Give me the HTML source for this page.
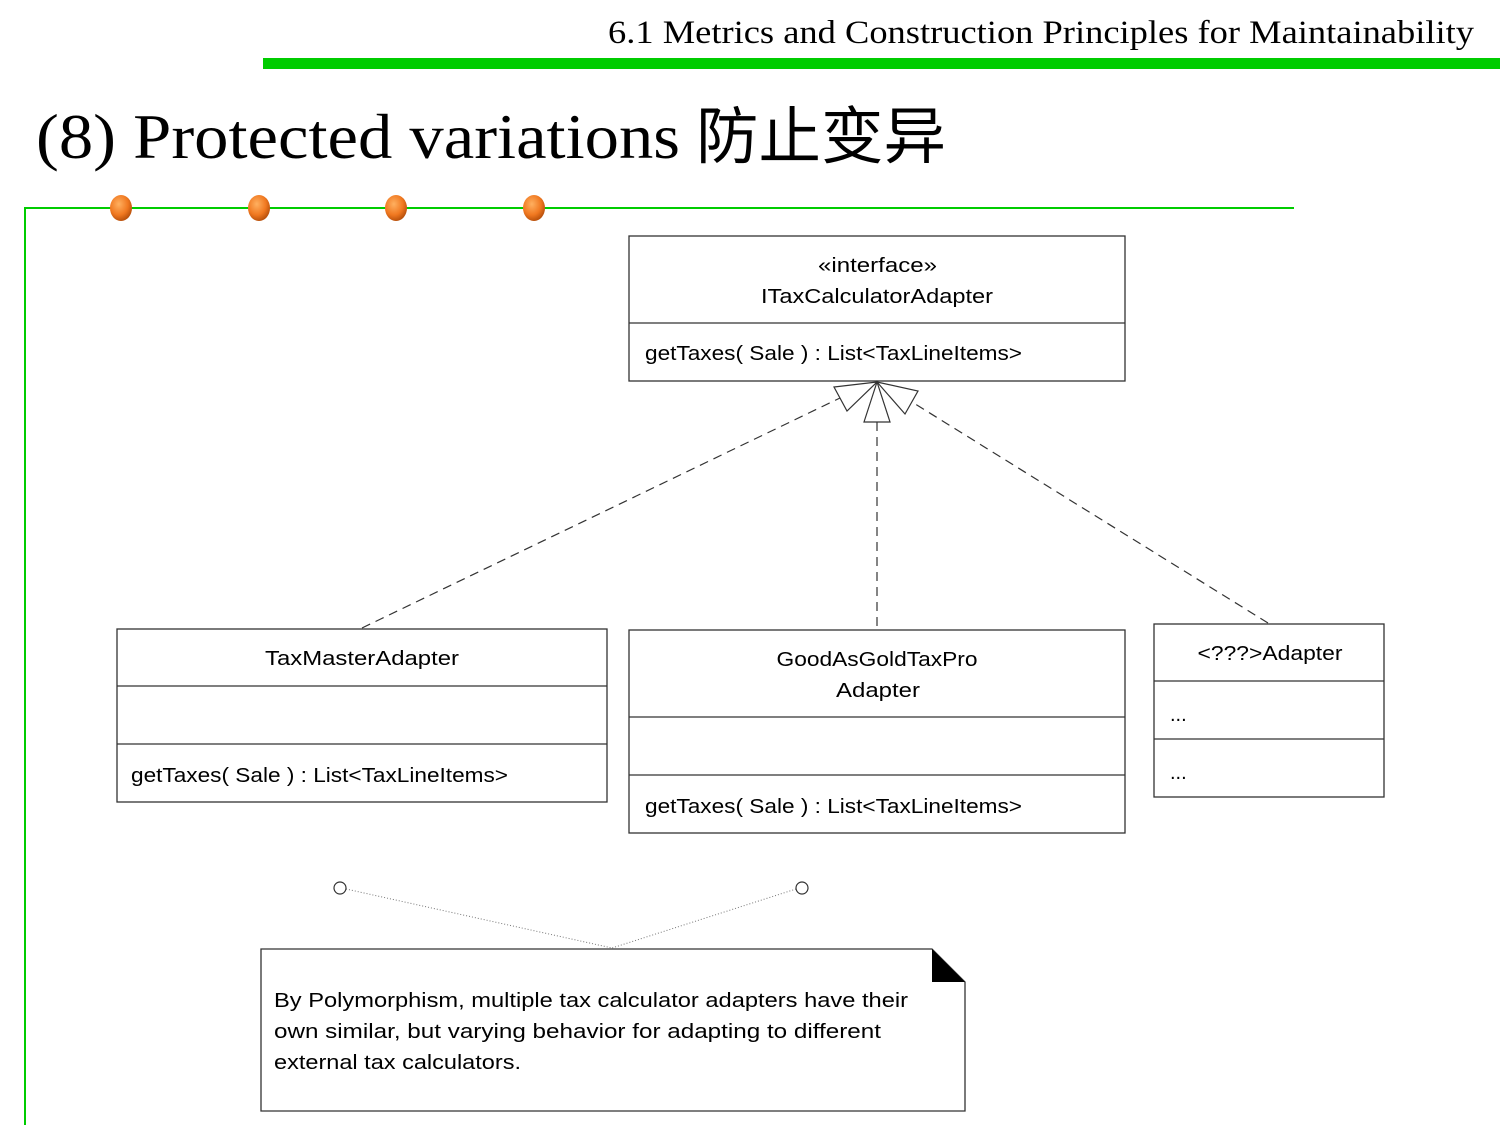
<!DOCTYPE html>
<html><head><meta charset="utf-8"><style>
html,body{margin:0;padding:0;background:#fff;width:1500px;height:1125px;overflow:hidden}
svg{display:block}
.c{font-family:"Liberation Sans",sans-serif;font-size:20px;fill:#000}
.s{font-family:"Liberation Serif",serif;fill:#000}
</style></head><body>
<svg width="1500" height="1125" viewBox="0 0 1500 1125">
<defs>
<radialGradient id="g" cx="0.4" cy="0.35" r="0.7">
<stop offset="0" stop-color="#ffb060"/><stop offset="0.6" stop-color="#f07820"/><stop offset="1" stop-color="#b04a08"/>
</radialGradient>
</defs>
<text class="s" x="608" y="43" font-size="33" textLength="866" lengthAdjust="spacingAndGlyphs">6.1 Metrics and Construction Principles for Maintainability</text>
<rect x="263" y="58" width="1237" height="11" fill="#00cc00"/>
<text class="s" x="36" y="158" font-size="64" textLength="644" lengthAdjust="spacingAndGlyphs">(8) Protected variations</text>
<text x="696" y="158" font-size="62" font-family="'Noto Sans CJK SC',sans-serif" textLength="250" lengthAdjust="spacingAndGlyphs">防止变异</text>
<line x1="24" y1="208" x2="1294" y2="208" stroke="#00cc00" stroke-width="2"/>
<line x1="25" y1="207" x2="25" y2="1125" stroke="#00cc00" stroke-width="2"/>
<ellipse cx="121" cy="208" rx="11" ry="13" fill="url(#g)"/>
<ellipse cx="259" cy="208" rx="11" ry="13" fill="url(#g)"/>
<ellipse cx="396" cy="208" rx="11" ry="13" fill="url(#g)"/>
<ellipse cx="534" cy="208" rx="11" ry="13" fill="url(#g)"/>

<g fill="#fff" stroke="#333" stroke-width="1.3">
<rect x="629" y="236" width="496" height="145"/>
<line x1="629" y1="323" x2="1125" y2="323"/>
<rect x="117" y="629" width="490" height="173"/>
<line x1="117" y1="686" x2="607" y2="686"/>
<line x1="117" y1="744" x2="607" y2="744"/>
<rect x="629" y="630" width="496" height="203"/>
<line x1="629" y1="717" x2="1125" y2="717"/>
<line x1="629" y1="775" x2="1125" y2="775"/>
<rect x="1154" y="624" width="230" height="173"/>
<line x1="1154" y1="681" x2="1384" y2="681"/>
<line x1="1154" y1="739" x2="1384" y2="739"/>
<path d="M261 949 H932 L965 982 V1111 H261 Z"/>
</g>
<path d="M932 949 L965 982 H932 Z" fill="#000"/>

<g stroke="#333" stroke-width="1.2" fill="none" stroke-dasharray="9,6">
<line x1="362" y1="628" x2="840" y2="398"/>
<line x1="877" y1="422" x2="877" y2="629"/>
<line x1="1268" y1="623" x2="912" y2="402"/>
</g>
<g stroke="#333" stroke-width="1.2" fill="#fff">
<path d="M877 382 L834 387 L847 411 Z"/>
<path d="M877 382 L864 422 L890 422 Z"/>
<path d="M877 382 L918 391 L905 414 Z"/>
</g>
<g stroke="#777" stroke-width="1" stroke-dasharray="1,2" fill="none">
<line x1="346" y1="889" x2="612" y2="948"/>
<line x1="796" y1="889" x2="612" y2="948"/>
</g>
<circle cx="340" cy="888" r="6" fill="#fff" stroke="#333" stroke-width="1.2"/>
<circle cx="802" cy="888" r="6" fill="#fff" stroke="#333" stroke-width="1.2"/>

<text class="c" x="818" y="272" textLength="119" lengthAdjust="spacingAndGlyphs">«interface»</text>
<text class="c" x="877" y="303" text-anchor="middle" textLength="232" lengthAdjust="spacingAndGlyphs">ITaxCalculatorAdapter</text>
<text class="c" x="645" y="360" textLength="377" lengthAdjust="spacingAndGlyphs">getTaxes( Sale ) : List&lt;TaxLineItems&gt;</text>
<text class="c" x="362" y="665" text-anchor="middle" textLength="194" lengthAdjust="spacingAndGlyphs">TaxMasterAdapter</text>
<text class="c" x="131" y="782" textLength="377" lengthAdjust="spacingAndGlyphs">getTaxes( Sale ) : List&lt;TaxLineItems&gt;</text>
<text class="c" x="877" y="666" text-anchor="middle" textLength="201" lengthAdjust="spacingAndGlyphs">GoodAsGoldTaxPro</text>
<text class="c" x="836" y="697" textLength="84" lengthAdjust="spacingAndGlyphs">Adapter</text>
<text class="c" x="645" y="813" textLength="377" lengthAdjust="spacingAndGlyphs">getTaxes( Sale ) : List&lt;TaxLineItems&gt;</text>
<text class="c" x="1270" y="660" text-anchor="middle" textLength="145" lengthAdjust="spacingAndGlyphs">&lt;???&gt;Adapter</text>
<text class="c" x="1170" y="721">...</text>
<text class="c" x="1170" y="779">...</text>
<text class="c" x="274" y="1007" textLength="634" lengthAdjust="spacingAndGlyphs">By Polymorphism, multiple tax calculator adapters have their</text>
<text class="c" x="274" y="1038" textLength="607" lengthAdjust="spacingAndGlyphs">own similar, but varying behavior for adapting to different</text>
<text class="c" x="274" y="1069" textLength="247" lengthAdjust="spacingAndGlyphs">external tax calculators.</text>
</svg>
</body></html>
